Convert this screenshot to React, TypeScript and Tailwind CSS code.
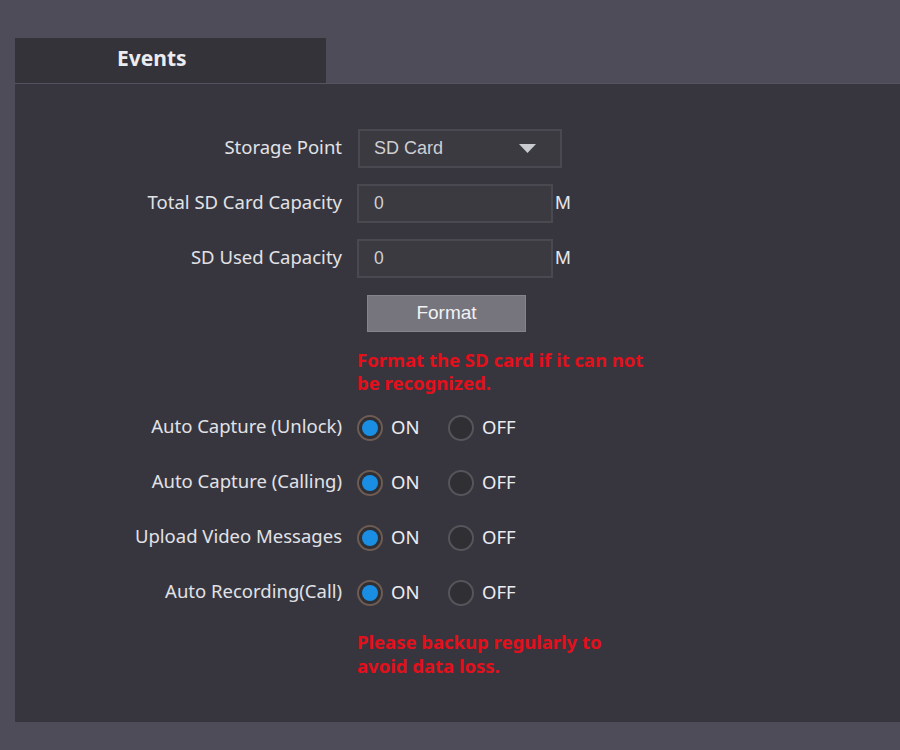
import React from "react";

const labelFont = { fontFamily: '"Noto Sans", "Open Sans", sans-serif' };
const arial = { fontFamily: '"Liberation Sans", Arial, sans-serif' };

function Label({ children }: { children: React.ReactNode }) {
  return (
    <div className="w-[342px] shrink-0 pb-[3px] pr-[15px] text-right text-[18.5px] text-[#e2e2e6]" style={labelFont}>
      {children}
    </div>
  );
}

function RadioRow({ label }: { label: string }) {
  return (
    <div className="flex h-[39px] items-center">
      <Label>{label}</Label>
      <div className="flex items-center">
        <span className="flex h-[26px] w-[26px] items-center justify-center rounded-full border-[2px] border-[#6e5c52] bg-[#2f2f34]">
          <span className="h-[16px] w-[16px] rounded-full bg-[#1a8ee2]" />
        </span>
        <span className="ml-[8px] w-[57px] pb-[2px] text-[18.5px] text-[#ececf0]" style={labelFont}>ON</span>
        <span className="h-[26px] w-[26px] rounded-full border-[2px] border-[#56555b] bg-[#2f2f34]" />
        <span className="ml-[8px] pb-[2px] text-[18.5px] text-[#ececf0]" style={labelFont}>OFF</span>
      </div>
    </div>
  );
}

function Warning({ lines, leading }: { lines: string[]; leading: string }) {
  return (
    <div className={`pl-[342px] text-[18.5px] font-bold text-[#e3101b] ${leading}`} style={labelFont}>
      {lines.map((l) => (
        <div key={l}>{l}</div>
      ))}
    </div>
  );
}

export default function App() {
  return (
    <div className="min-h-[750px] w-full bg-[#4e4c59] pt-[38px]">
      <div className="ml-[15px]">
        <div className="h-[45px] w-[311px] bg-[#343339] pl-[102px] pt-[5px] text-[21px] font-bold text-[#ececf0]" style={labelFont}>
          Events
        </div>
        <div className="h-[639px] border-t border-[#55535f] bg-[#37363f] pt-[45px]">
          <div className="flex h-[39px] items-center">
            <Label>Storage Point</Label>
            <div className="ml-[1px] flex h-[39px] w-[204px] items-center justify-between border-[2px] border-[#4a4951] bg-[#3a3a40] pl-[14px] pr-[24px] text-[18px] text-[#cfcfd4]" style={arial}>
              <span>SD Card</span>
              <svg width="17" height="9" viewBox="0 0 17 9"><path d="M0 0 L17 0 L8.5 9 Z" fill="#c9c9d0" /></svg>
            </div>
          </div>
          <div className="mt-[16px] flex h-[39px] items-center">
            <Label>Total SD Card Capacity</Label>
            <div className="flex h-[39px] w-[196px] items-center border-[2px] border-[#4a4951] bg-[#3a3a40] pl-[15px] text-[17.5px] text-[#cfcfd4]" style={arial}>0</div>
            <span className="ml-[2px] text-[19px] text-[#e6e6ea]" style={arial}>M</span>
          </div>
          <div className="mt-[16px] flex h-[39px] items-center">
            <Label>SD Used Capacity</Label>
            <div className="flex h-[39px] w-[196px] items-center border-[2px] border-[#4a4951] bg-[#3a3a40] pl-[15px] text-[17.5px] text-[#cfcfd4]" style={arial}>0</div>
            <span className="ml-[2px] text-[19px] text-[#e6e6ea]" style={arial}>M</span>
          </div>
          <div className="mt-[17px] pl-[352px]">
            <button className="flex h-[37px] w-[159px] items-center justify-center border border-[#85848c] bg-[#76757d] text-[19px] text-[#f2f2f4]" style={arial}>
              Format
            </button>
          </div>
          <div className="mt-[16px]">
            <Warning lines={["Format the SD card if it can not", "be recognized."]} leading="leading-[23px]" />
          </div>
          <div className="mt-[14px] flex flex-col gap-[16px]">
            <RadioRow label="Auto Capture (Unlock)" />
            <RadioRow label="Auto Capture (Calling)" />
            <RadioRow label="Upload Video Messages" />
            <RadioRow label="Auto Recording(Call)" />
          </div>
          <div className="mt-[18px]">
            <Warning lines={["Please backup regularly to", "avoid data loss."]} leading="leading-[24px]" />
          </div>
        </div>
      </div>
    </div>
  );
}
